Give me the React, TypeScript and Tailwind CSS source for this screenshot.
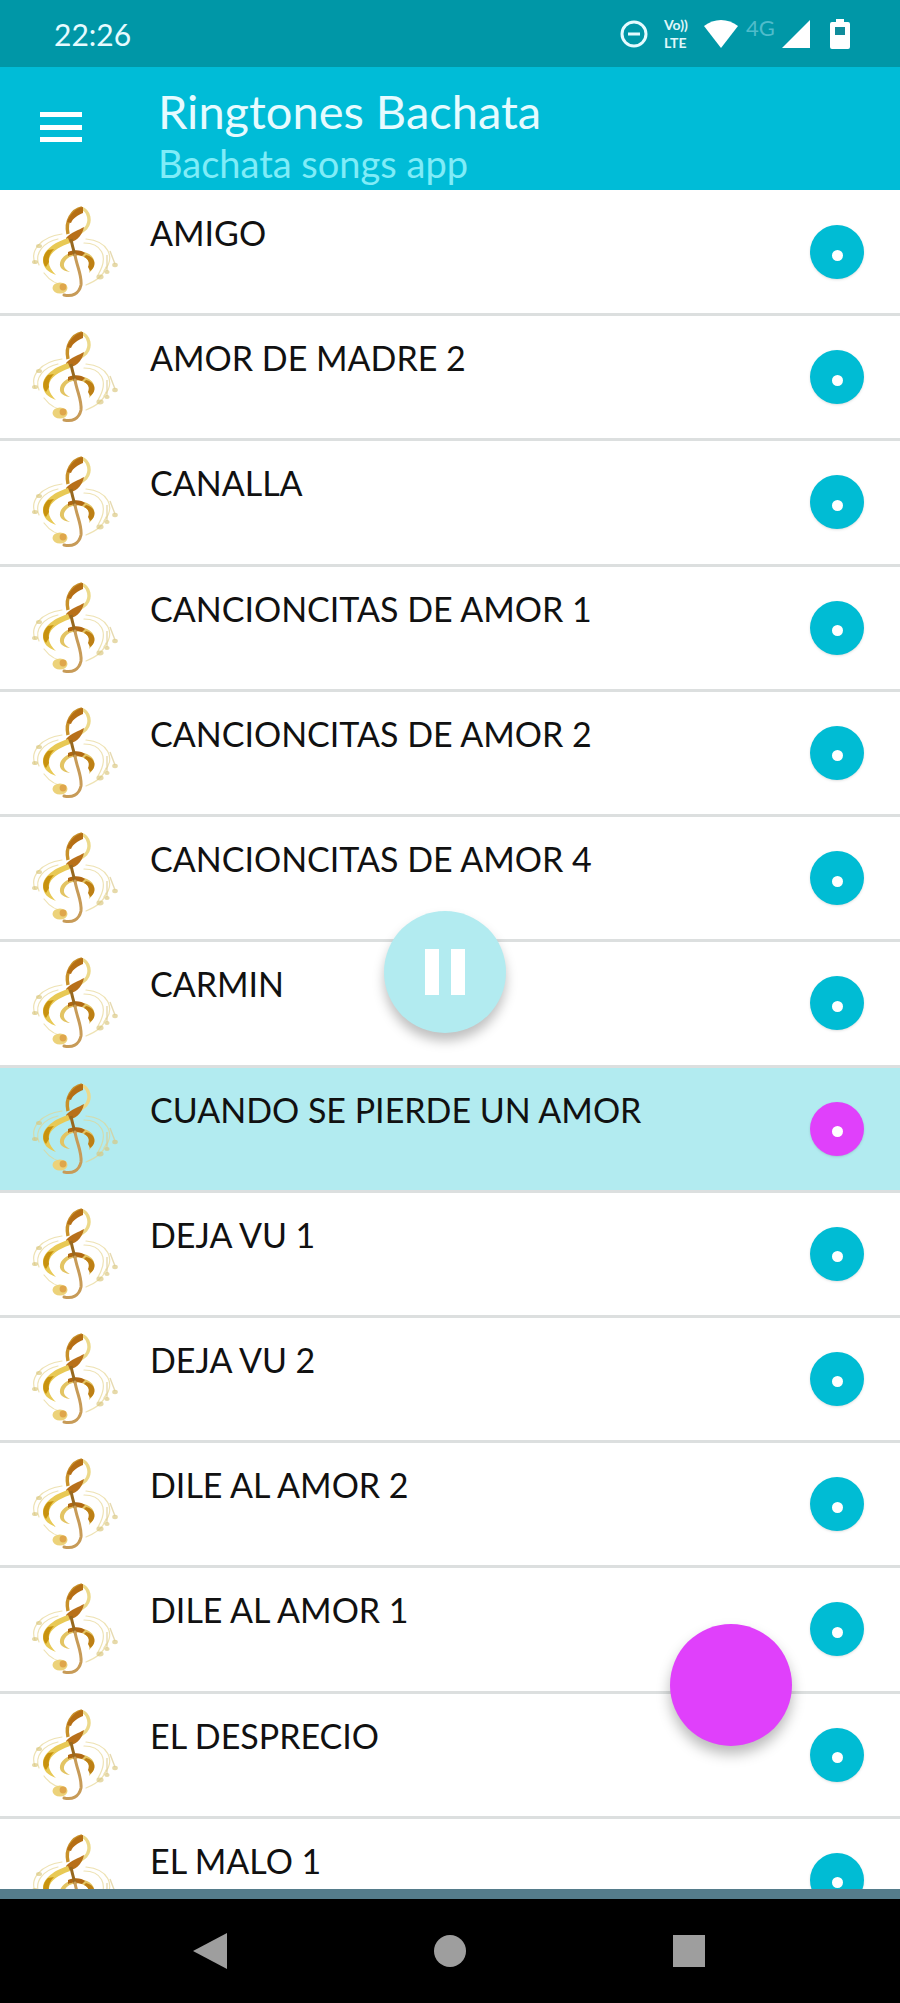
import { useState } from 'react';

interface Song {
  id: number;
  title: string;
}

const songs: Song[] = [
  { id: 1, title: 'AMIGO' },
  { id: 2, title: 'AMOR DE MADRE 2' },
  { id: 3, title: 'CANALLA' },
  { id: 4, title: 'CANCIONCITAS DE AMOR 1' },
  { id: 5, title: 'CANCIONCITAS DE AMOR 2' },
  { id: 6, title: 'CANCIONCITAS DE AMOR 4' },
  { id: 7, title: 'CARMIN' },
  { id: 8, title: 'CUANDO SE PIERDE UN AMOR' },
  { id: 9, title: 'DEJA VU 1' },
  { id: 10, title: 'DEJA VU 2' },
  { id: 11, title: 'DILE AL AMOR 2' },
  { id: 12, title: 'DILE AL AMOR 1' },
  { id: 13, title: 'EL DESPRECIO' },
  { id: 14, title: 'EL MALO 1' },
];

const ClefIcon = () => (
  <svg viewBox="30 30 92 100" className="h-[100px] w-[92px] shrink-0" fill="none" aria-hidden="true">
    <g stroke="#e6d48c" strokeWidth="1.2" opacity="0.65" strokeLinecap="round">
      <path d="M35 90C30 78 40 64 62 61" />
      <path d="M39 92C34 80 44 69 58 66" />
      <path d="M84 70C100 70 110 82 98 102" />
      <path d="M86 66C108 68 116 84 104 98" />
      <path d="M44 100C50 108 58 112 66 112" />
      <path d="M86 112C96 108 104 102 106 94" />
    </g>
    <g fill="#d9c67c" opacity="0.65">
      <ellipse cx="35" cy="89" rx="3" ry="2" />
      <ellipse cx="39" cy="73" rx="3" ry="2" />
      <ellipse cx="100" cy="104" rx="3.6" ry="2.4" />
      <ellipse cx="107" cy="99" rx="2.6" ry="2" />
      <ellipse cx="115" cy="92" rx="2.8" ry="2.2" />
    </g>
    <path d="M107 98V82M115 91L110 78" stroke="#dccb90" strokeWidth="1.4" opacity="0.7" />
    {/* head loop */}
    <path d="M81 35C90 38 91 49 86 55C82 59 77 61 72 64" stroke="#ecd98a" strokeWidth="3.4" />
    <path d="M82 35C72 37 65 48 68 61" stroke="#c8912a" strokeWidth="3.4" />
    <path d="M83 34C76 35 70 41 67 49L71 50C73 45 78 42 83 40Z" fill="#b56e14" />
    <path d="M84 54C79 57 71 59 66 65L67 70C75 69 82 64 84 54Z" fill="#b8701a" />
    {/* outer bowl */}
    <path d="M68 65C55 69 43 77 43 87C43 95 48 99 56 102C51 97 48 92 49 87C50 79 59 74 70 70Z" fill="#e8c955" />
    <path d="M48 77C42 83 42 90 46 94L49 89C48 85 50 80 54 76Z" fill="#c8920f" />
    {/* inner curl */}
    <path d="M70 99C61 98 58 93 61 87C66 79 78 76 87 80C96 84 97 93 89 100C91 93 90 87 84 84C77 81 69 83 66 87C62 92 64 96 70 99Z" fill="#e3c463" />
    <path d="M68 79C74 76 82 77 85 80L82 83C77 81 72 81 68 83Z" fill="#b06814" />
    <path d="M86 82C96 84 97 94 90 98L88 94C90 89 88 86 84 84Z" fill="#bd7f14" />
    {/* stem */}
    <path d="M71 66C72 72 74 78 75 83" stroke="#98691f" strokeWidth="3" />
    <path d="M75 82C77 94 82 102 81 112C79 121 72 124 64 122" stroke="#c79b58" strokeWidth="3" strokeLinecap="round" />
    <ellipse cx="60" cy="115" rx="7.5" ry="5.5" fill="#ecd27a" />
    <circle cx="63" cy="114" r="3.4" fill="#dfa64c" />
  </svg>
);

const StatusBar = () => (
  <div className="flex h-[67px] shrink-0 items-center bg-[#0097a7] pr-[50px] pl-[54px] text-white">
    <span className="text-[30px] leading-9 text-[#e6fbff]">22:26</span>
    <div className="ml-auto flex items-center">
      <svg viewBox="0 0 28 28" className="h-7 w-7" fill="none" stroke="#e6fbff" strokeWidth="3" aria-hidden="true">
        <circle cx="14" cy="14" r="12" />
        <path d="M8 14h12" />
      </svg>
      <div className="ml-4 flex w-8 flex-col gap-px text-[14px] leading-[17px] font-bold text-[#e0f7fa]">
        <p>Vo))</p>
        <p>LTE</p>
      </div>
      <svg viewBox="0 0 34 28" className="ml-2 h-7 w-[34px]" fill="#fff" aria-hidden="true">
        <path d="M0 6C10-2 24-2 34 6L17 28Z" />
      </svg>
      <span className="mb-3 ml-2 w-8 text-[22px] leading-5 text-[#4fbccb]">4G</span>
      <svg viewBox="0 0 28 28" className="ml-1 h-7 w-7" fill="#fff" aria-hidden="true">
        <path d="M28 0V28H0Z" />
      </svg>
      <svg viewBox="0 0 20 30" className="ml-5 h-[30px] w-5" aria-hidden="true">
        <path d="M6 0h8v3h4a2 2 0 0 1 2 2v23a2 2 0 0 1-2 2H2a2 2 0 0 1-2-2V5a2 2 0 0 1 2-2h4z" fill="#fff" />
        <path d="M5 8h10v8H5z" fill="#0f8c9b" />
      </svg>
    </div>
  </div>
);

const App = () => {
  const [currentId, setCurrentId] = useState(8);

  return (
    <div className="flex h-screen flex-col overflow-hidden bg-white font-['Lato','Open_Sans',sans-serif]">
      <StatusBar />

      <header className="flex h-[123px] shrink-0 bg-[#00bcd7] pl-10">
        <button aria-label="Menu" className="mt-[45px] flex h-[30px] w-[42px] flex-col justify-between">
          <span className="h-[5px] w-full bg-white" />
          <span className="h-[5px] w-full bg-white" />
          <span className="h-[5px] w-full bg-white" />
        </button>
        <div className="ml-[76px] pt-4">
          <h1 className="text-[47px] leading-[56px] text-[#e6fbff]">Ringtones Bachata</h1>
          <p className="text-[38px] leading-[48px] text-[#80ecf8]">Bachata songs app</p>
        </div>
      </header>

      <main className="relative flex-1 overflow-hidden">
        <ul className="grid min-h-[1754px] auto-rows-fr pt-px">
          {songs.map((song) => (
            <li
              key={song.id}
              className={`flex items-start border-b-3 border-[#dcdfdf] pr-9 pl-[30px] ${
                song.id === currentId ? 'bg-[#b2ebf0]' : 'bg-white'
              }`}
            >
              <div className="pt-3">
                <ClefIcon />
              </div>
              <p className="ml-7 flex-1 pt-5 text-[34px] leading-[44px] text-[#111]">{song.title}</p>
              <button
                aria-label={`Play ${song.title}`}
                onClick={() => setCurrentId(song.id)}
                className={`mt-[34px] flex h-[54px] w-[54px] items-center justify-center rounded-full pt-[6px] shadow-sm ${
                  song.id === currentId ? 'bg-[#e040fb]' : 'bg-[#00bcd4]'
                }`}
              >
                <span className="h-[11px] w-[11px] rounded-full bg-white" />
              </button>
            </li>
          ))}
        </ul>

        <button
          aria-label="Pause"
          className="absolute top-[721px] left-[calc(50%-66px)] flex h-[122px] w-[122px] items-center justify-center gap-3 rounded-full bg-[#b2ebf0] shadow-[0_8px_12px_rgba(0,0,0,0.25)]"
        >
          <span className="h-[46px] w-[14px] bg-white" />
          <span className="h-[46px] w-[14px] bg-white" />
        </button>
        <button
          aria-label="Options"
          className="absolute right-[108px] bottom-[143px] h-[122px] w-[122px] rounded-full bg-[#e040fb] shadow-[0_8px_14px_rgba(0,0,0,0.28)]"
        />
      </main>

      <div className="h-[10px] shrink-0 bg-[#557c8b]" />
      <nav className="flex h-[104px] shrink-0 items-center justify-center gap-[203px] bg-black text-[#9e9e9e]">
        <button aria-label="Back">
          <svg viewBox="0 0 36 36" className="h-9 w-9" fill="currentColor">
            <path d="M0 18L34 0V36Z" />
          </svg>
        </button>
        <button aria-label="Home">
          <svg viewBox="0 0 36 36" className="h-9 w-9" fill="currentColor">
            <circle cx="18" cy="18" r="16" />
          </svg>
        </button>
        <button aria-label="Recents">
          <svg viewBox="0 0 36 36" className="h-9 w-9" fill="currentColor">
            <path d="M2 2h32v32H2z" />
          </svg>
        </button>
      </nav>
    </div>
  );
};

export default App;
